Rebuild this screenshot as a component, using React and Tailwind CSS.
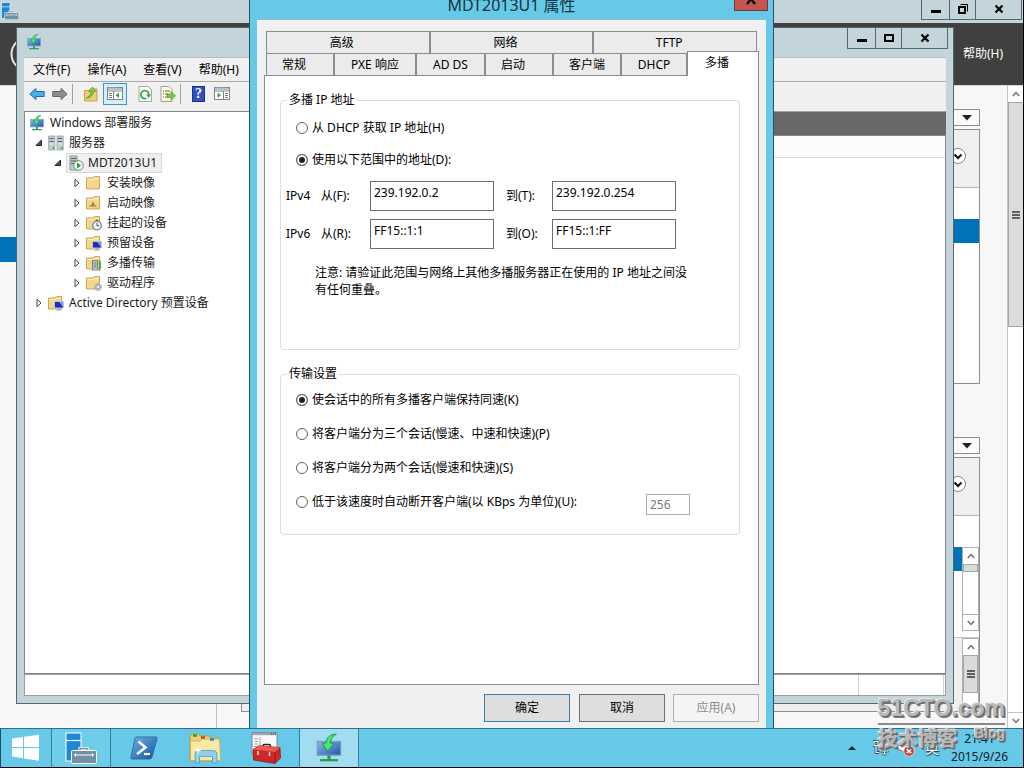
import React, { useState } from 'react';

const uiFont = "font-['Noto_Sans','Noto_Sans_CJK_SC',sans-serif]";

/* ---------- icons ---------- */

function MonitorIcon({ className }) {
    return (
        <svg className={className} viewBox="0 0 16 18" aria-hidden="true">
            <defs>
                <linearGradient id="screen" x1="0" y1="0" x2="1" y2="1">
                    <stop offset="0" stopColor="#8fb8e6" />
                    <stop offset="1" stopColor="#1f55b0" />
                </linearGradient>
            </defs>
            <rect x="0.8" y="5" width="14.4" height="8.4" fill="url(#screen)" stroke="#7f9db5" strokeWidth="0.8" />
            <rect x="7" y="13.5" width="2" height="2.5" fill="#2a9a50" />
            <path d="M2.5 16.5 h11" stroke="#2a9a50" strokeWidth="1.4" />
            <path d="M12.5 0.5 C8.5 0.5 6.5 2.5 6.2 6 H3.8 L7.2 11 L11 6 H8.8 C9 3.8 10 2 12.5 0.5 Z" fill="#4be57b" stroke="#1c9a48" strokeWidth="0.6" />
        </svg>
    );
}

function ServerManagerIcon({ className }) {
    return (
        <svg className={className} viewBox="0 0 32 32" aria-hidden="true">
            <rect x="1" y="1" width="15" height="28" fill="#1e88d6" stroke="#fff" />
            <path d="M1 8.5 h15" stroke="#fff" strokeWidth="1.2" />
            <path d="M15 19 V16.5 H22 V19" fill="none" stroke="#fff" strokeWidth="3.2" />
            <path d="M15 19 V16.5 H22 V19" fill="none" stroke="#7390a5" strokeWidth="1.6" />
            <rect x="6.5" y="18.5" width="25" height="13" rx="1" fill="#7390a5" stroke="#fff" />
            <path d="M9 23 h20 M10.5 21.5 v3 M27.5 21.5 v3" stroke="#fff" strokeWidth="1" />
        </svg>
    );
}

function ArrowIcon({ back }) {
    return (
        <svg className="h-4 w-4" viewBox="0 0 16 16" aria-hidden="true">
            {back ? (
                <path d="M0.8 8 L7 2.5 V5.5 H15.2 V10.5 H7 V13.5 Z" fill="#4aaee8" stroke="#1d6fb4" />
            ) : (
                <path d="M15.2 8 L9 2.5 V5.5 H0.8 V10.5 H9 V13.5 Z" fill="#8f8f8f" stroke="#666" />
            )}
        </svg>
    );
}

function UpFolderIcon() {
    return (
        <svg className="h-4 w-4" viewBox="0 0 16 16" aria-hidden="true">
            <path d="M1.5 15 V4.5 H6 L7.5 3 H14 V15 Z" fill="#efce74" stroke="#b8923c" strokeWidth="0.8" />
            <path d="M3 12 C6 11 7.5 9 7.8 5.5 H5.5 L9.5 1 L13 5.5 H10.5 C10 10 7 12.5 3 12 Z" fill="#7ec544" stroke="#4c8f22" strokeWidth="0.6" />
        </svg>
    );
}

function PaneIcon({ right }) {
    return (
        <svg className="h-4 w-4" viewBox="0 0 16 16" aria-hidden="true">
            <rect x="0.5" y="1.5" width="15" height="12" fill="#fff" stroke="#7d858f" />
            <path d="M0.5 3 h15 M0.5 5 h15" stroke="#7d858f" />
            <path d="M1 2.2 h10" stroke="#b9c0c8" />
            {right ? (
                <g>
                    <path d="M9.5 5 V13" stroke="#7d858f" />
                    <path d="M11 7.5 h3 M11 9.5 h3 M11 11.5 h3" stroke="#777" />
                    <path d="M3.5 6.5 V12 L7 9.2 Z" fill="#3fa535" />
                </g>
            ) : (
                <g>
                    <path d="M6.5 5 V13" stroke="#7d858f" />
                    <path d="M2 7.5 h3 M2 9.5 h3 M2 11.5 h3" stroke="#777" />
                    <path d="M12 6.5 V12 L8.5 9.2 Z" fill="#3fa535" />
                </g>
            )}
        </svg>
    );
}

function RefreshIcon() {
    return (
        <svg className="h-4 w-4" viewBox="0 0 16 16" aria-hidden="true">
            <path d="M2 0.5 H11 L14.5 3.5 V15.5 H2 Z" fill="#fbfbfb" stroke="#a6a6a6" />
            <path d="M9.5 12.2 A4 4 0 1 1 11.8 9" fill="none" stroke="#3fa84c" strokeWidth="1.8" />
            <path d="M9 8.6 H14 L11.6 12 Z" fill="#3fa84c" />
        </svg>
    );
}

function ExportIcon() {
    return (
        <svg className="h-4 w-4" viewBox="0 0 16 16" aria-hidden="true">
            <path d="M1 0.5 H9 L12 3.5 V15.5 H1 Z" fill="#fdf9e6" stroke="#a6a08c" />
            <path d="M3 5 h1 M5 5 h5 M3 8 h1 M5 8 h3 M3 11 h1 M5 11 h3" stroke="#666" />
            <path d="M7 8 H11 V5.5 L15.6 9.8 L11 14 V11.5 H7 Z" fill="#74c83c" stroke="#4b9a24" strokeWidth="0.6" />
        </svg>
    );
}

function Folder({ children }) {
    return (
        <svg className="h-4 w-4 shrink-0" viewBox="0 0 16 16" aria-hidden="true">
            <path d="M0.5 14 V3 H7 L8.5 1.5 H13.5 V14 Z" fill="#f3d78d" stroke="#c79e4b" strokeWidth="0.9" />
            <path d="M1 4.5 H8 L9 3.5 H13" stroke="#fff3cb" strokeWidth="0.9" fill="none" />
            {children}
        </svg>
    );
}

function MonitorBadge() {
    return (
        <g>
            <rect x="6.5" y="6.5" width="9" height="6.5" fill="#1f2fb4" stroke="#c9d4e6" strokeWidth="0.8" />
            <path d="M11 7 H15 V12 Z" fill="#6f9bea" />
            <path d="M8.5 15 h5 M11 13 v2" stroke="#8fa3b8" strokeWidth="1.2" />
        </g>
    );
}

function TreeIcon({ kind }) {
    if (kind === "root") return <MonitorIcon className="h-4 w-4 shrink-0" />;
    if (kind === "servers") {
        return (
            <svg className="h-4 w-4 shrink-0" viewBox="0 0 16 16" aria-hidden="true">
                <rect x="0.7" y="1" width="6.2" height="14" fill="#c3cccf" stroke="#8d999e" strokeWidth="0.7" />
                <rect x="9" y="1" width="6.2" height="14" fill="#c3cccf" stroke="#8d999e" strokeWidth="0.7" />
                <path d="M1.5 3.5 h4 M1.5 6.5 h4 M10 3.5 h4 M10 6.5 h4" stroke="#4d5a60" strokeWidth="0.9" />
                <path d="M1.5 9 h4 M10 9 h4" stroke="#f2f5f6" />
                <path d="M4.5 13 h2 M12.8 13 h2" stroke="#46c236" strokeWidth="1.8" />
            </svg>
        );
    }
    if (kind === "server") {
        return (
            <svg className="h-4 w-4 shrink-0" viewBox="0 0 16 16" aria-hidden="true">
                <path d="M2 15 V1 H9 V15 Z" fill="#c3cccf" stroke="#78858b" strokeWidth="0.8" />
                <path d="M3 3.5 h5 M3 6 h5 M3 8.5 h3" stroke="#4d5a60" />
                <circle cx="10.5" cy="10.5" r="4.8" fill="#f4f8f2" stroke="#5e7a68" strokeWidth="0.9" />
                <path d="M9 7.5 V13.5 L13 10.5 Z" fill="#2f9b2d" />
            </svg>
        );
    }
    return (
        <Folder>
            {kind === "boot" && (
                <g>
                    <path d="M3.5 11 h7" stroke="#8c6a2a" />
                    <path d="M7 6.5 L9 10.5 H5 Z" fill="#b5742a" />
                </g>
            )}
            {kind === "pending" && (
                <g>
                    <circle cx="11" cy="10.5" r="4.3" fill="#edf1f4" stroke="#7c858c" strokeWidth="1.3" />
                    <path d="M11 8 v2.8 h2 M9.8 5 h2.4" stroke="#4e575e" fill="none" />
                </g>
            )}
            {kind === "device" && <MonitorBadge />}
            {kind === "multicast" && (
                <g>
                    <rect x="6.5" y="5.5" width="5" height="9.5" fill="#c4ccd0" stroke="#66737a" strokeWidth="0.8" />
                    <path d="M7.5 8 h3 M7.5 10 h3 M7.5 12 h3" stroke="#56646b" strokeWidth="0.8" />
                    <path d="M12.5 6 h1.5 v9 h-1.5 M12.5 9 h3 M12.5 12 h3" stroke="#2f9b2d" fill="none" strokeWidth="1.2" />
                </g>
            )}
            {kind === "driver" && (
                <g>
                    <circle cx="12" cy="12" r="3" fill="none" stroke="#a5b3bf" strokeWidth="2.2" strokeDasharray="1.6 0.75" />
                    <circle cx="12" cy="12" r="2" fill="#e8eef2" stroke="#8c9aa6" strokeWidth="0.9" />
                </g>
            )}
        </Folder>
    );
}

function Chevron({ down, className }) {
    return (
        <svg className={className || "h-2 w-2"} viewBox="0 0 8 8" aria-hidden="true">
            <path d={down ? "M0.8 2 L4 5.4 L7.2 2" : "M0.8 6 L4 2.6 L7.2 6"} fill="none" stroke="#707070" strokeWidth="1.5" />
        </svg>
    );
}

function WindowButtons({ restore }) {
    return (
        <div className="flex h-[21px] border-x border-b border-[#566970]">
            <button className="flex w-7 items-center justify-center border-r border-[#566970]" aria-label="最小化">
                <svg className="h-3 w-3" viewBox="0 0 12 12"><path d="M1 8.5 h10" stroke="#000" strokeWidth="3" /></svg>
            </button>
            <button className="flex w-[26px] items-center justify-center border-r border-[#566970]" aria-label="最大化">
                {restore ? (
                    <svg className="h-3 w-3" viewBox="0 0 12 12">
                        <rect x="2" y="4" width="6" height="6" fill="none" stroke="#000" strokeWidth="2" />
                        <path d="M3.5 1.5 H10.5 V8.5" fill="none" stroke="#000" />
                    </svg>
                ) : (
                    <svg className="h-3 w-3" viewBox="0 0 12 12"><rect x="2" y="3" width="8" height="6" fill="none" stroke="#000" strokeWidth="2" /></svg>
                )}
            </button>
            <button className="flex w-[45px] items-center justify-center" aria-label="关闭">
                <svg className="h-3 w-3" viewBox="0 0 12 12"><path d="M2.5 2.5 L9.5 9.5 M9.5 2.5 L2.5 9.5" stroke="#000" strokeWidth="2.2" /></svg>
            </button>
        </div>
    );
}

function Grip() {
    return (
        <div className="flex flex-col gap-px">
            <div className="h-0.5 w-2 bg-[#606060]" />
            <div className="h-0.5 w-2 bg-[#606060]" />
            <div className="h-0.5 w-2 bg-[#606060]" />
        </div>
    );
}

/* ---------- server manager (background window) ---------- */

function DropArrow() {
    return (
        <button className="flex h-[17px] w-full items-center justify-end border border-[#8e8e8e] bg-[#fafafa] pr-[7px]" aria-label="展开任务">
            <svg className="h-1.5 w-2.5" viewBox="0 0 10 6"><path d="M0 0 H10 L5 5.5 Z" fill="#222" /></svg>
        </button>
    );
}

function CardHeader() {
    return (
        <div className="flex h-[58px] items-center justify-end border-b border-[#b4b4b4] bg-[#efefef] pb-1.5 pr-[13px]">
            <button className="flex h-4 w-4 items-center justify-center rounded-full border border-[#8a8a8a] bg-white" aria-label="展开">
                <svg className="h-2.5 w-2.5" viewBox="0 0 10 10"><path d="M1.5 3.5 L5 7 L8.5 3.5" fill="none" stroke="#000" strokeWidth="2" /></svg>
            </button>
        </div>
    );
}

function ServerManager() {
    return (
        <section className="flex h-full flex-col">
            <header className="flex h-[23px] justify-between bg-[#c3d5db] pr-px">
                <ServerManagerIcon className="ml-px mt-0.5 h-[18px] w-[18px]" />
                <div className="-mt-px"><WindowButtons restore /></div>
            </header>
            <div className="flex h-[62px] items-center justify-between bg-[#404040] pr-5">
                <svg className="ml-[10px] h-9 w-9" viewBox="0 0 36 36" aria-hidden="true"><circle cx="18" cy="18" r="16.5" fill="none" stroke="#e4e4e4" strokeWidth="2" /></svg>
                <a href="#help" className="text-xs text-white">帮助(H)</a>
            </div>
            <div className="flex min-h-0 flex-1 border-t border-[#d8d8d8]">
                <nav className="w-[217px] border-r border-[#bdbdbd] bg-[#f8f8f8] pt-[151px]">
                    <div className="h-[25px] bg-[#0072bc]" />
                </nav>
                <div className="flex flex-1 flex-col bg-[#f7f7f7] pb-4 pl-6 pr-[27px] pt-[23px]">
                    <DropArrow />
                    <div className="mt-[3px] h-[255px] border border-[#8e8e8e] bg-white">
                        <CardHeader />
                        <div className="mt-[31px] h-6 bg-[#0072bc]" />
                    </div>
                    <div className="mt-[53px]"><DropArrow /></div>
                    <div className="mt-[3px] flex min-h-0 flex-1 flex-col overflow-hidden border border-[#8e8e8e] bg-white">
                        <CardHeader />
                        <div className="mt-[31px] flex h-[84px] shrink-0">
                            <div className="h-6 flex-1 bg-[#0072bc]" />
                            <div className="flex w-[17px] flex-col border border-[#b0b0b0] bg-white">
                                <div className="flex h-4 items-center justify-center"><Chevron /></div>
                                <div className="h-2 border border-[#a6a6a6] bg-[#dadada]" />
                                <div className="mt-auto flex h-4 items-center justify-center border-t border-[#b0b0b0]"><Chevron down /></div>
                            </div>
                        </div>
                        <div className="mt-1.5 flex min-h-0 flex-1 border-t border-[#c4c4c4] bg-[#efefef]">
                            <div className="ml-auto flex w-[17px] flex-col border border-[#b0b0b0] bg-white">
                                <div className="flex h-4 items-center justify-center"><Chevron /></div>
                                <div className="flex h-[38px] items-center justify-center border border-[#a6a6a6] bg-[#dadada]"><Grip /></div>
                            </div>
                        </div>
                    </div>
                </div>
                <div className="flex w-4 flex-col border-l border-[#c4c4c4] bg-white">
                    <div className="flex h-4 items-center justify-center"><Chevron /></div>
                    <div className="flex h-[225px] items-center justify-center border border-r-0 border-[#a6a6a6] bg-[#dcdcdc]"><Grip /></div>
                    <div className="mt-auto flex h-4 items-center justify-center border-t border-[#c4c4c4]"><Chevron down /></div>
                </div>
            </div>
        </section>
    );
}

/* ---------- deployment services console ---------- */

const tree = [
    { label: "Windows 部署服务", kind: "root", pad: "pl-1" },
    { label: "服务器", kind: "servers", pad: "pl-2.5", open: true },
    { label: "MDT2013U1", kind: "server", pad: "pl-[29px]", open: true, selected: true },
    { label: "安装映像", kind: "folder", pad: "pl-12", open: false },
    { label: "启动映像", kind: "boot", pad: "pl-12", open: false },
    { label: "挂起的设备", kind: "pending", pad: "pl-12", open: false },
    { label: "预留设备", kind: "device", pad: "pl-12", open: false },
    { label: "多播传输", kind: "multicast", pad: "pl-12", open: false },
    { label: "驱动程序", kind: "driver", pad: "pl-12", open: false },
    { label: "Active Directory 预置设备", kind: "device", pad: "pl-2.5", open: false },
];

function TreeRow({ item }) {
    return (
        <li className={`flex h-5 items-center whitespace-nowrap ${item.pad}`}>
            {item.open !== undefined && (
                <svg className="mr-[5px] h-2 w-2 shrink-0" viewBox="0 0 8 8" aria-hidden="true">
                    {item.open ? (
                        <path d="M6.5 1 V6.5 H1 Z" fill="#555" stroke="#222" />
                    ) : (
                        <path d="M2 0.3 V7.7 L6 4 Z" fill="#fff" stroke="#333" strokeWidth="0.9" />
                    )}
                </svg>
            )}
            <span className={item.selected ? "-ml-px flex h-5 items-center gap-1 border border-[#d9d9d9] bg-[#f0f0f0] pl-px pr-1" : "flex items-center gap-[5px]"}>
                <TreeIcon kind={item.kind} />
                {item.label}
            </span>
        </li>
    );
}

function Console() {
    return (
        <section className="absolute bottom-6 left-4 right-[69px] top-[27px] flex flex-col border border-[#566970] bg-[#c3d5db] px-[7px] pb-[7px]">
            <header className="-mr-[2px] flex h-[29px] shrink-0 justify-between">
                <MonitorIcon className="ml-0.5 mt-1.5 h-4 w-4" />
                <WindowButtons />
            </header>
            <div className="flex min-h-0 flex-1 flex-col border-t border-[#b3bcc0] bg-[#f0f0f0] text-xs">
                <nav className="flex h-6 shrink-0 items-center gap-[17px] border-b border-[#a9a9a9] pl-[9px]">
                    <button>文件(F)</button>
                    <button>操作(A)</button>
                    <button>查看(V)</button>
                    <button>帮助(H)</button>
                </nav>
                <div className="flex h-[29px] shrink-0 items-center pb-1.5 pl-[5px]">
                    <button aria-label="后退"><ArrowIcon back /></button>
                    <button className="ml-[7px]" aria-label="前进"><ArrowIcon /></button>
                    <div className="ml-1 h-5 w-px bg-[#a0a0a0]" />
                    <button className="ml-2.5" aria-label="向上"><UpFolderIcon /></button>
                    <button className="ml-1 flex h-[22px] w-6 items-center justify-center border border-[#3c96c8] bg-[#d8ecf6]" aria-label="显示树"><PaneIcon /></button>
                    <button className="ml-2.5" aria-label="刷新"><RefreshIcon /></button>
                    <button className="ml-[7px]" aria-label="导出"><ExportIcon /></button>
                    <div className="ml-1 h-5 w-px bg-[#a0a0a0]" />
                    <button className="ml-[11px] flex h-4 w-[13px] items-center justify-center border border-[#1d2f86] bg-[#3350c0] font-['Liberation_Serif',serif] text-sm font-bold leading-4 text-white" aria-label="帮助">?</button>
                    <button className="ml-[9px]" aria-label="操作窗格"><PaneIcon right /></button>
                </div>
                <div className="flex min-h-0 flex-1 border-b border-[#828790]">
                    <ul className="w-[280px] border-l border-t border-[#828790] bg-white pt-px text-[#1a1a1a]">
                        {tree.map((item, i) => <TreeRow key={i} item={item} />)}
                    </ul>
                    <div className="flex flex-1 flex-col">
                        <div className="h-6 border-t border-[#a0a0a0] bg-[#696969]" />
                        <div className="flex-1 border-r border-t border-[#828790] bg-white">
                            <div className="h-[22px] border-b border-[#dedede] bg-[#fcfcfc]" />
                        </div>
                    </div>
                </div>
                <footer className="flex h-[22px] shrink-0 justify-end border border-[#9c9c9c] bg-white">
                    <div className="mr-px w-[86px] border-x border-[#d0d0d0]" />
                </footer>
            </div>
        </section>
    );
}

/* ---------- properties dialog ---------- */

const topTabs = ["高级", "网络", "TFTP"];
const tabs = [
    { label: "常规", size: "w-[68px] pr-3" },
    { label: "PXE 响应", size: "w-[82px]" },
    { label: "AD DS", size: "w-[69px]" },
    { label: "启动", size: "w-[68px] pr-3" },
    { label: "客户端", size: "w-[68px]" },
    { label: "DHCP", size: "w-[66px]" },
];

function Radio({ name, label, checked, onChange }) {
    return (
        <label className="flex h-4 items-center gap-1">
            <input
                type="radio"
                name={name}
                checked={checked}
                onChange={onChange}
                className="h-3 w-3 appearance-none rounded-full border border-[#606060] bg-white checked:bg-[#222] checked:shadow-[inset_0_0_0_2px_#fff]"
            />
            {label}
        </label>
    );
}

function RangeRow({ version, fromLabel, toLabel, from, to }) {
    const box = "h-[30px] w-[124px] border border-[#6d6d6d] bg-white pb-2 pl-[3px] text-xs";
    return (
        <div className="flex items-center">
            <span className="w-[35px]">{version}</span>
            <label htmlFor={version + "-from"} className="w-[49px]">{fromLabel}</label>
            <input id={version + "-from"} className={box} defaultValue={from} />
            <label htmlFor={version + "-to"} className="ml-3 w-[46px]">{toLabel}</label>
            <input id={version + "-to"} className={box} defaultValue={to} />
        </div>
    );
}

function PropertiesDialog() {
    const [source, setSource] = useState(1);
    const [transfer, setTransfer] = useState(0);

    const transferOptions = [
        "使会话中的所有多播客户端保持同速(K)",
        "将客户端分为三个会话(慢速、中速和快速)(P)",
        "将客户端分为两个会话(慢速和快速)(S)",
        "低于该速度时自动断开客户端(以 KBps 为单位)(U):",
    ];

    return (
        <section role="dialog" className="absolute bottom-0 left-[249px] top-0 flex w-[525px] flex-col border-x border-[#22536b] bg-[#66c9e8] px-[7px] text-xs text-black">
            <header className="relative flex h-[19px] shrink-0 items-end justify-center pb-1">
                <h1 className="text-base leading-5 text-[#16343f]">MDT2013U1 属性</h1>
                <button className="absolute -right-0.5 top-0 flex h-[11px] w-[34px] items-start justify-center border border-t-0 border-[#6e3a40] bg-[#c4564f]" aria-label="关闭">
                    <svg className="h-1.5 w-3" viewBox="0 0 12 6"><path d="M6 -1 L10 4 M6 -1 L2 4" stroke="#000" strokeWidth="2.4" /></svg>
                </button>
            </header>
            <div className="flex min-h-0 flex-1 flex-col border-t border-[#8fb9c8] bg-[#f0f0f0] px-[7px] pb-1.5 pt-[11px]">
                <div className="mx-0.5 flex h-[22px] shrink-0">
                    {topTabs.map((t) => (
                        <button key={t} className="flex-1 border border-b-0 border-[#8a8c94] bg-[#ebebeb] pr-3">{t}</button>
                    ))}
                </div>
                <div className="ml-0.5 flex h-[22px] shrink-0">
                    {tabs.map((t) => (
                        <button key={t.label} className={`border border-b-0 border-[#8a8c94] bg-[#ebebeb] ${t.size}`}>{t.label}</button>
                    ))}
                    <button className="z-10 -mb-px -mt-0.5 flex-1 border border-b-0 border-[#8a8c94] bg-white pb-0.5 pr-3">多播</button>
                </div>
                <div className="flex-1 border border-[#8a8c94] bg-white pl-[15px] pr-[18px] pt-4">
                    <fieldset className="h-[258px] rounded-sm border border-[#d5dfe5] pl-[5px]">
                        <legend className="ml-px px-0.5 leading-4">多播 IP 地址</legend>
                        <div className="mt-3 flex flex-col gap-4 pl-2.5">
                            <Radio name="source" label="从 DHCP 获取 IP 地址(H)" checked={source === 0} onChange={() => setSource(0)} />
                            <Radio name="source" label="使用以下范围中的地址(D):" checked={source === 1} onChange={() => setSource(1)} />
                        </div>
                        <div className="mt-[13px] flex flex-col gap-2">
                            <RangeRow version="IPv4" fromLabel="从(F):" toLabel="到(T):" from="239.192.0.2" to="239.192.0.254" />
                            <RangeRow version="IPv6" fromLabel="从(R):" toLabel="到(O):" from="FF15::1:1" to="FF15::1:FF" />
                        </div>
                        <p className="mt-[15px] whitespace-nowrap pl-[29px] leading-[17px]">
                            注意: 请验证此范围与网络上其他多播服务器正在使用的 IP 地址之间没<br />有任何重叠。
                        </p>
                    </fieldset>
                    <fieldset className="mt-4 h-[169px] rounded-sm border border-[#d5dfe5] pl-[5px]">
                        <legend className="ml-px px-0.5 leading-4">传输设置</legend>
                        <div className="mt-2.5 flex flex-col gap-[18px] pl-2.5">
                            {transferOptions.map((label, i) => (
                                <div key={i} className="flex h-4 items-center justify-between pr-[49px]">
                                    <Radio name="transfer" label={label} checked={transfer === i} onChange={() => setTransfer(i)} />
                                    {i === 3 && (
                                        <input aria-label="KBps" disabled={transfer !== 3} defaultValue="256" className="mt-1 h-[21px] w-11 border border-[#a8adb2] bg-white pl-[3px] text-xs text-[#7a7a7a]" />
                                    )}
                                </div>
                            ))}
                        </div>
                    </fieldset>
                </div>
                <div className="mt-[9px] flex h-7 shrink-0 justify-end">
                    <button className="w-[86px] border border-[#3f7fae] bg-[#dedede]">确定</button>
                    <button className="ml-[9px] w-[86px] border border-[#707070] bg-[#dedede]">取消</button>
                    <button disabled className="ml-2 w-[86px] border border-[#adb2b5] bg-[#f4f4f4] text-[#8b8b8b]">应用(A)</button>
                </div>
            </div>
        </section>
    );
}

/* ---------- taskbar ---------- */

function Taskbar() {
    return (
        <footer className="relative flex h-10 shrink-0 border-b border-l border-t border-b-black border-l-[#1f4c5e] border-t-[#2f6f8a] bg-[#66c9e8]">
            <button className="flex w-[50px] items-center justify-center" aria-label="开始">
                <svg className="h-7 w-7" viewBox="0 0 28 28">
                    <path d="M0 4.5 L11 3 V13 H0 Z M12 2.8 L27 0.8 V13 H12 Z M0 14 H11 V24.2 L0 22.6 Z M12 14 H27 V26.8 L12 24.4 Z" fill="#fff" />
                </svg>
            </button>
            <button className="flex w-[60px] items-center justify-center border-x border-[#2f7f9f] bg-[#6fcdea]" aria-label="服务器管理器">
                <ServerManagerIcon className="h-8 w-8" />
            </button>
            <button className="flex w-[65px] items-center justify-center" aria-label="PowerShell">
                <svg className="h-7 w-7" viewBox="0 0 28 28">
                    <defs>
                        <linearGradient id="ps" x1="0" y1="0" x2="1" y2="1">
                            <stop offset="0" stopColor="#6db4e4" />
                            <stop offset="1" stopColor="#12509c" />
                        </linearGradient>
                    </defs>
                    <path d="M6.5 3 H26 Q27.5 3 27 4.8 L22 23 Q21.5 25 19.5 25 H2 Q0.5 25 1 23 L5 4.5 Q5.3 3 6.5 3 Z" fill="url(#ps)" stroke="#2c6ea8" />
                    <path d="M8.5 7.5 L15.5 13.5 L7 20" fill="none" stroke="#fff" strokeWidth="2.6" />
                    <path d="M14 20 h6" stroke="#fff" strokeWidth="2.2" />
                </svg>
            </button>
            <button className="flex w-[58px] items-center justify-center" aria-label="文件资源管理器">
                <svg className="h-8 w-8" viewBox="0 0 32 32">
                    <path d="M1 29 V4 L3 2 H10 L11 4 H20 L22 6 H30 V29 Z" fill="#e9cf78" stroke="#b8983c" />
                    <path d="M1.5 28.5 V9 H11 L13 7 H30.5 L31.5 28.5 Z" fill="#f7e9a2" stroke="#c9ae57" strokeWidth="0.8" />
                    <path d="M4 3.5 h4" stroke="#24a03a" strokeWidth="2.4" />
                    <path d="M12 5.5 h4" stroke="#c8452b" strokeWidth="2.4" />
                    <path d="M21 7.5 h4" stroke="#2d83c6" strokeWidth="2.4" />
                    <path d="M6 31 V22 Q6 18.5 10 18.5 H24 Q28 18.5 28 22 V31 H23.5 V24.5 H10.5 V31 Z" fill="#8fd0ee" stroke="#4c9cc6" strokeWidth="0.8" />
                    <path d="M9 14 l1 3 3 1 -3 1 -1 3 -1 -3 -3 -1 3 -1 Z" fill="#fff" />
                </svg>
            </button>
            <button className="flex w-[65px] items-center justify-center" aria-label="部署工作台">
                <svg className="h-8 w-8" viewBox="0 0 32 32">
                    <rect x="1" y="0.5" width="25" height="21" fill="#fbfbfb" stroke="#7b8996" />
                    <path d="M1 2 h25" stroke="#9aa6b2" strokeWidth="2.4" />
                    <path d="M20 2 h1 M22 2 h1 M24 2 h1" stroke="#2e3b48" strokeWidth="1.2" />
                    <path d="M9 5 V20 M3 7 h4 M4 9.5 h3 M4 12 h3 M3 14.5 h3" stroke="#8ea0b0" />
                    <path d="M12 16 V13.5 Q12 12.5 13.5 12.5 H18 Q19.5 12.5 19.5 14 V16" fill="none" stroke="#3a1614" strokeWidth="1.4" />
                    <path d="M2 17.5 L8 13.8 L29 15.5 L29.5 26 L24 31.5 L2.5 28 Z" fill="#cf2724" stroke="#7d1512" strokeWidth="0.7" />
                    <path d="M2 17.5 L24 20 L29 15.5 L8 13.8 Z" fill="#ea5a50" />
                    <path d="M24 20 V31" stroke="#8f1815" />
                    <path d="M7 19 v4 M18.5 20 v4" stroke="#f1d9d5" strokeWidth="1.6" />
                </svg>
            </button>
            <button className="flex w-[60px] items-center justify-center border-x border-[#2f7f9f] bg-[#a1dcf1]" aria-label="Windows 部署服务">
                <MonitorIcon className="h-[30px] w-[26px]" />
            </button>
            <div className="ml-auto flex items-center pr-[15px]">
                <svg className="mr-[17px] h-1.5 w-2" viewBox="0 0 8 6" aria-hidden="true"><path d="M0 5 L4 1 L8 5 Z" fill="#12262e" /></svg>
                <svg className="h-4 w-4" viewBox="0 0 16 16" aria-hidden="true">
                    <path d="M1 1.5 h4 v4 h-4 Z M3 6 v6.5 h3 M7 4 h8 v7 h-8 Z M9 14 h5 M11.5 11 v3" fill="none" stroke="#163b4a" strokeWidth="2.6" />
                    <path d="M1 1.5 h4 v4 h-4 Z M3 6 v6.5 h3 M7 4 h8 v7 h-8 Z M9 14 h5 M11.5 11 v3" fill="none" stroke="#fff" strokeWidth="1.2" />
                </svg>
                <svg className="ml-2 h-[18px] w-[18px]" viewBox="0 0 18 18" aria-hidden="true">
                    <path d="M1 6 h3 l5 -4 v13 l-5 -4 h-3 Z" fill="#fff" stroke="#4c6c79" strokeWidth="0.8" />
                    <circle cx="12" cy="12" r="5.2" fill="#d9342b" stroke="#f4d6d2" strokeWidth="0.8" />
                    <path d="M9.8 9.8 l4.4 4.4 M14.2 9.8 l-4.4 4.4" stroke="#fff" strokeWidth="1.7" />
                </svg>
                <span className="ml-2.5 text-sm text-white [text-shadow:0_0_2px_#163b4a,1px_1px_1px_#163b4a]">英</span>
                <div className="ml-3 text-center text-xs leading-[18px] text-[#0e2027]">
                    <div>21:41</div>
                    <div>2015/9/26</div>
                </div>
            </div>
        </footer>
    );
}

function Watermark() {
    return (
        <div className="pointer-events-none absolute bottom-[15px] right-[18px] z-20 font-bold text-[#b9b9b9] [text-shadow:1px_1px_0_#686868,2px_2px_0_#7d7d7d,-1px_-1px_0_#e8e8e8]">
            <div className="border-b-2 border-[#8a8a8a] font-['Liberation_Sans',sans-serif] text-[23px] leading-[30px]">51CTO.com</div>
            <div className="flex justify-between">
                <span className="text-[20px] leading-7">技术博客</span>
                <span className="font-['Liberation_Sans',sans-serif] text-sm leading-4">Blog</span>
            </div>
        </div>
    );
}

function App() {
    return (
        <div className={`relative flex h-screen flex-col overflow-hidden border-r border-black bg-[#f7f7f7] ${uiFont}`}>
            <main className="relative min-h-0 flex-1">
                <ServerManager />
                <Console />
                <PropertiesDialog />
            </main>
            <Taskbar />
            <Watermark />
        </div>
    );
}

export default App;
